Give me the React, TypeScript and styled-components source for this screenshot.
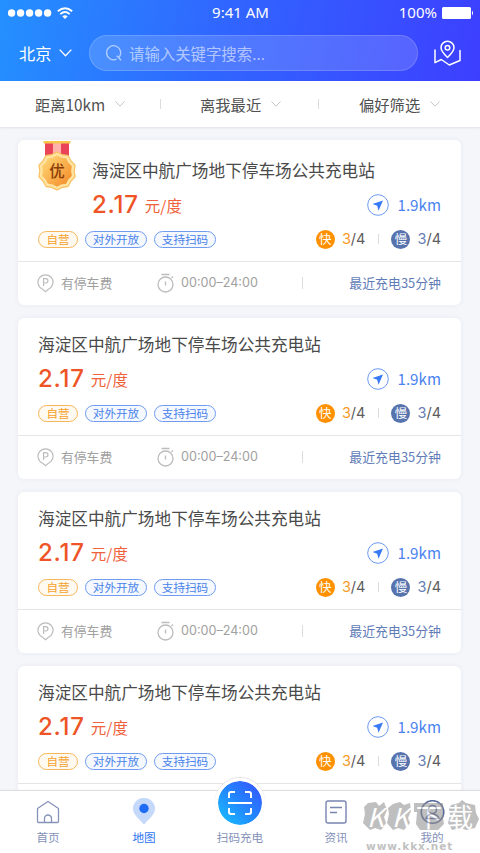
import React from "react";
import styled, { createGlobalStyle, css } from "styled-components";

const Global = createGlobalStyle`
  * { box-sizing: border-box; }
  body { margin: 0; background: #f5f6fa; }
  svg { display: block; flex: none; }
`;

const cjk = `"Noto Sans CJK SC", sans-serif`;
const latin = `Inter, "Noto Sans CJK SC", sans-serif`;

const Screen = styled.main`
  width: 480px;
  height: 853px;
  overflow: hidden;
  display: flex;
  flex-direction: column;
  background: #f5f6fa;
  font-family: ${cjk};
  white-space: nowrap;
`;

const Header = styled.header`
  flex: none;
  height: 81px;
  background: linear-gradient(100deg, #2490ff 0%, #3164ff 48%, #3d3fff 100%);
  color: #fff;
`;

const StatusBar = styled.div`
  display: grid;
  grid-template-columns: 1fr auto 1fr;
  align-items: center;
  height: 26px;
  padding: 0 6px 0 8px;
  font: 400 15px/24px "Noto Sans", sans-serif;
`;

const Clock = styled.span`
  padding: 0 1px 2px 0;
`;

const Percent = styled.span`
  padding-bottom: 2px;
`;

const Signal = styled.div`
  display: flex;
  align-items: center;
  gap: 5px;
`;

const Battery = styled.div`
  display: flex;
  align-items: center;
  justify-content: flex-end;
  gap: 5px;
`;

const SearchRow = styled.div`
  display: flex;
  align-items: center;
  height: 36px;
  margin-top: 9px;
  padding: 0 17px 0 19px;
`;

const City = styled.div`
  display: flex;
  align-items: center;
  gap: 8px;
  width: 70px;
  font-size: 16.2px;
`;

const SearchField = styled.div`
  display: flex;
  align-items: center;
  gap: 7px;
  width: 329px;
  height: 36px;
  margin-right: 15px;
  padding-left: 16px;
  border: 1px solid rgba(255, 255, 255, 0.16);
  border-radius: 18px;
  background: rgba(255, 255, 255, 0.15);
  color: rgba(255, 255, 255, 0.58);
  font-size: 15.4px;
`;

const Filters = styled.nav`
  flex: none;
  display: grid;
  grid-template-columns: 161px 158px 161px;
  height: 46px;
  background: #fff;
  box-shadow: 0 1px 2px rgba(40, 50, 90, 0.1);
  color: #505050;
  font-size: 15.3px;
`;

const Filter = styled.div<{ $left: number }>`
  display: flex;
  align-items: center;
  gap: 10px;
  padding-left: ${(p) => p.$left}px;
`;

const Rule = styled.i<{ $h?: number }>`
  width: 1px;
  height: ${(p) => p.$h ?? 10}px;
  background: #dcdcdf;
`;

const FilterRule = styled(Rule)`
  margin-left: auto;
`;

const List = styled.section`
  flex: 1;
  min-height: 0;
  overflow: hidden;
  display: flex;
  flex-direction: column;
  gap: 13px;
  padding: 13px 19px 0 18px;
`;

const Card = styled.article<{ $featured: boolean }>`
  flex: none;
  position: relative;
  height: ${(p) => (p.$featured ? 165 : 161)}px;
  padding-top: ${(p) => (p.$featured ? 18 : 14)}px;
  border-radius: 6px;
  background: #fff;
  box-shadow: 0 0 5px rgba(60, 70, 120, 0.07);
`;

const MedalSlot = styled.div`
  position: absolute;
  left: 19px;
  top: 1px;
`;

const Title = styled.h2<{ $featured: boolean }>`
  margin: 0;
  padding-left: ${(p) => (p.$featured ? 74 : 20)}px;
  height: 26px;
  font-size: 16.65px;
  line-height: 25px;
  font-weight: 400;
  color: #4a4a4a;
`;

const PriceRow = styled.div<{ $featured: boolean }>`
  display: flex;
  align-items: center;
  justify-content: space-between;
  height: 41px;
  padding: 0 20px 0 ${(p) => (p.$featured ? 74 : 20)}px;
`;

const Price = styled.div`
  display: flex;
  align-items: center;
  gap: 6px;
  color: #f0623c;
  font-size: 15.5px;
`;

const Amount = styled.strong`
  color: #ee5426;
  font: 500 24px/30px Inter, sans-serif;
  letter-spacing: 0.8px;
`;

const Unit = styled.span`
  line-height: 24px;
  padding-top: 1px;
`;

const Distance = styled.div`
  display: flex;
  align-items: center;
  gap: 8px;
  color: #4a83f0;
  font-size: 15.2px;
  line-height: 20px;
`;

const Kilometres = styled.span`
  padding-bottom: 2px;
`;

const TagRow = styled.div`
  display: flex;
  align-items: center;
  height: 28px;
  padding: 0 20px;
  gap: 7px;
`;

const Tag = styled.span<{ $warm?: boolean }>`
  display: flex;
  align-items: center;
  justify-content: center;
  height: 17px;
  width: ${(p) => (p.$warm ? 40 : 62)}px;
  border: 1px solid;
  border-radius: 9px;
  font-size: 11.6px;
  line-height: 15px;
  ${(p) =>
    p.$warm
      ? css`color: #f5a12c; border-color: #f7b65c; background: #fffaf1;`
      : css`color: #4a83ea; border-color: #6f9cf0; background: #f5f9ff;`}
`;

const Chargers = styled.div`
  display: flex;
  align-items: center;
  margin-left: auto;
  font: 400 14.5px/20px ${latin};
  color: #5c5c5c;
`;

const Speed = styled.span<{ $fast?: boolean }>`
  display: grid;
  place-items: center;
  width: 19px;
  height: 19px;
  margin-right: 7px;
  border-radius: 50%;
  background: ${(p) => (p.$fast ? "#ff9100" : "#5673ae")};
  color: #fff;
  font: 400 12.5px/18px ${cjk};
`;

const Free = styled.b<{ $fast?: boolean }>`
  font-weight: 400;
  color: ${(p) => (p.$fast ? "#f79a1f" : "#6680b5")};
`;

const ChargerRule = styled(Rule)`
  margin: 0 12px 0 13px;
`;

const CardFooter = styled.footer`
  display: grid;
  grid-template-columns: 120px 145px 1fr;
  align-items: center;
  height: 44px;
  margin-top: 8px;
  padding: 0 20px 2px 19px;
  border-top: 1px solid #e4e4e9;
  color: #a0a0a0;
  font-size: 12.8px;
`;

const Fact = styled.div`
  display: flex;
  align-items: center;
  gap: 7px;
`;

const Hours = styled.span`
  font: 400 12.6px/20px ${latin};
`;

const Recent = styled.div`
  display: flex;
  align-items: center;
  justify-content: space-between;
  color: #5f7cb8;
  font-size: 12.9px;
`;

const TabBar = styled.nav`
  flex: none;
  position: relative;
  display: grid;
  grid-template-columns: repeat(5, 96px);
  grid-template-rows: 62px;
  height: 62px;
  background: #fff;
  box-shadow: 0 -1px 1px #dedee2;
  z-index: 1;
`;

const Tab = styled.div<{ $active?: boolean }>`
  display: flex;
  flex-direction: column;
  align-items: center;
  justify-content: flex-end;
  gap: 4px;
  padding-bottom: 7px;
  color: ${(p) => (p.$active ? "#2b74f3" : "#8592b9")};
  font-size: 11.6px;
  line-height: 17px;
`;

const ScanButton = styled.div`
  flex: none;
  display: grid;
  place-items: center;
  width: 50px;
  height: 50px;
  margin-bottom: -3px;
  border: 3px solid #fff;
  border-radius: 50%;
  background: linear-gradient(225deg, #3558ff 8%, #2386ff 50%, #18c4ff 100%) padding-box;
  box-shadow: 0 -1px 1px #dedee2;
`;

const Watermark = styled.div`
  position: absolute;
  left: 363px;
  top: 8px;
  width: 117px;
  height: 54px;
  opacity: 0.55;
`;

const MarkArt = styled.svg`
  position: absolute;
  inset: 0;
`;

const MarkName = styled.div`
  position: absolute;
  left: 4px;
  top: 2px;
  display: grid;
  grid-template-columns: 25px 24px 31px 28px;
  color: #fff;
  font: 400 26px/30px ${cjk};
`;

const Slanted = styled.span`
  font-style: italic;
`;

const MarkSite = styled.div`
  position: absolute;
  left: 3px;
  top: 41px;
  color: #8f8f8f;
  font: 700 10.5px/12px "DejaVu Sans", sans-serif;
  letter-spacing: 0.95px;
`;

const Chevron = ({ w = 10, color = "#c5c5c8" }: { w?: number; color?: string }) => (
  <svg width={w} height={w * 0.6} viewBox="0 0 10 6" fill="none" stroke={color} strokeWidth="1">
    <path d="M.5.5 5 5.2 9.5.5" />
  </svg>
);

const scallop = (r: number) =>
  Array.from({ length: 20 }, (_, i) => {
    const a = (Math.PI * i) / 10 - Math.PI / 2;
    const d = i % 2 ? r * 0.9 : r;
    return `${(20 + d * Math.cos(a)).toFixed(2)},${(30 + d * Math.sin(a)).toFixed(2)}`;
  }).join(" ");

const Medal = () => (
  <svg width="40" height="51" viewBox="0 0 40 51" strokeLinejoin="round">
    <defs>
      <linearGradient id="gold" x1="0" y1="0" x2="1" y2="1">
        <stop offset="0" stopColor="#ffd978" />
        <stop offset="1" stopColor="#f58a28" />
      </linearGradient>
    </defs>
    <path d="M8 2h24v16H8z" fill="#e94458" />
    <path d="M16 2h8v16h-8z" fill="#ffb3ab" />
    <path d="M6.500 0h27v2.500h-27z" fill="#f6c84e" />
    <polygon points={scallop(17.5)} fill="#f9bf5e" stroke="#f9bf5e" strokeWidth="4" />
    <polygon points={scallop(16.5)} fill="#ffe3a0" stroke="#ffe3a0" strokeWidth="3.500" />
    <polygon points={scallop(14.5)} fill="url(#gold)" stroke="url(#gold)" strokeWidth="2" />
    <text x="20" y="35.500" textAnchor="middle" fontSize="15.500" fontWeight="500" fill="#8a3c06" fontFamily="Noto Sans CJK SC, sans-serif">
      优
    </text>
  </svg>
);

const stations = [true, false, false, false];

const Station = ({ featured }: { featured: boolean }) => (
  <Card $featured={featured}>
    {featured && (
      <MedalSlot>
        <Medal />
      </MedalSlot>
    )}
    <Title $featured={featured}>海淀区中航广场地下停车场公共充电站</Title>
    <PriceRow $featured={featured}>
      <Price>
        <Amount>2.17</Amount>
        <Unit>元/度</Unit>
      </Price>
      <Distance>
        <svg width="22" height="22" viewBox="0 0 22 22">
          <circle cx="11" cy="11" r="10.300" fill="none" stroke="#6d9bf3" />
          <path d="M16 6.500 5.500 10l4.700 1.700 1.300 5z" fill="#3879f5" />
        </svg>
        <Kilometres>1.9km</Kilometres>
      </Distance>
    </PriceRow>
    <TagRow>
      <Tag $warm>自营</Tag>
      <Tag>对外开放</Tag>
      <Tag>支持扫码</Tag>
      <Chargers>
        <Speed $fast>快</Speed>
        <Free $fast>3</Free>/4
        <ChargerRule />
        <Speed>慢</Speed>
        <Free>3</Free>/4
      </Chargers>
    </TagRow>
    <CardFooter>
      <Fact>
        <svg width="17" height="20" viewBox="0 0 17 20" fill="none" stroke="#bdbdbd" strokeWidth="1.200">
          <path d="M5.600 16.200a7.500 7.500 0 1 1 5.800 0L8.500 18.800z" />
          <path d="M6.600 13V5.700h2.200a2.100 2.100 0 0 1 0 4.300H6.600" />
        </svg>
        有停车费
      </Fact>
      <Fact>
        <svg width="17" height="20" viewBox="0 0 17 20" fill="none" stroke="#bdbdbd" strokeWidth="1.300">
          <circle cx="8.500" cy="11.500" r="7.500" />
          <path d="M4.500 1.500h8M8.500 8.500v4M14.500 5l1.500-1.500" />
        </svg>
        <Hours>00:00–24:00</Hours>
      </Fact>
      <Recent>
        <Rule $h={12} />
        最近充电35分钟
      </Recent>
    </CardFooter>
  </Card>
);

export default function App() {
  return (
    <Screen>
      <Global />
      <Header>
        <StatusBar>
          <Signal>
            <svg width="44" height="8" viewBox="0 0 44 8" fill="#fff">
              {[3.6, 12.6, 21.6, 30.6, 39.6].map((x) => (
                <circle key={x} cx={x} cy="4" r="3.700" />
              ))}
            </svg>
            <svg width="16" height="12" viewBox="0 0 16 12" fill="none" stroke="#fff" strokeWidth="1.900">
              <path d="M.8 4.200q7.200-6 14.400 0M3.300 7.100q4.700-4 9.400 0" />
              <path d="M5.300 9.200q2.700-2 5.400 0L8 12z" fill="#fff" stroke="none" />
            </svg>
          </Signal>
          <Clock>9:41 AM</Clock>
          <Battery>
            <Percent>100%</Percent>
            <svg width="32" height="12" viewBox="0 0 32 12" fill="#fff">
              <rect width="29" height="12" rx="1.500" />
              <path d="M30 3.500q2 2.500 0 5z" />
            </svg>
          </Battery>
        </StatusBar>
        <SearchRow>
          <City>
            北京
            <Chevron w={13} color="#fff" />
          </City>
          <SearchField>
            <svg width="16" height="16" viewBox="0 0 16 16" fill="none" stroke="currentColor" strokeWidth="1.300">
              <path d="M10.600 14.100a7 7 0 1 1 2-1.400M10.800 10.800l4.300 4.500" />
            </svg>
            请输入关键字搜索...
          </SearchField>
          <svg width="28" height="27" viewBox="0 0 28 27" fill="none" stroke="#fff" strokeWidth="1.500" strokeLinejoin="round" strokeLinecap="round">
            <path d="M14.500 17.500C10.500 13.500 8 10.800 8 7.700a6.500 6.500 0 0 1 13 0c0 3.100-2.500 5.800-6.500 9.800z" />
            <circle cx="14.500" cy="7.700" r="2.300" />
            <path d="M2 10v12.700l6.300-3.200 8 5.500L27 20.500V10.500" />
          </svg>
        </SearchRow>
      </Header>
      <Filters>
        <Filter $left={35}>
          距离10km
          <Chevron />
          <FilterRule />
        </Filter>
        <Filter $left={39}>
          离我最近
          <Chevron />
          <FilterRule />
        </Filter>
        <Filter $left={40}>
          偏好筛选
          <Chevron />
        </Filter>
      </Filters>
      <List>
        {stations.map((featured, i) => (
          <Station key={i} featured={featured} />
        ))}
      </List>
      <TabBar>
        <Tab>
          <svg width="24" height="25" viewBox="0 0 24 25" fill="none" stroke="#8592b9" strokeWidth="1.300" strokeLinejoin="round">
            <path d="M1.500 8.500 12 1.500l10.500 7v13q0 1-1 1h-19q-1 0-1-1z" />
            <path d="M8.500 22.500v-4a3.500 3.500 0 0 1 7 0v4" />
          </svg>
          首页
        </Tab>
        <Tab $active>
          <svg width="22" height="27" viewBox="0 0 22 27">
            <path d="M11 26.500C5 20 0 16.500 0 10.800a11 11 0 0 1 22 0C22 16.500 17 20 11 26.500z" fill="#c5d9fb" />
            <circle cx="11" cy="10.500" r="4.700" fill="#1f6bf6" />
          </svg>
          地图
        </Tab>
        <Tab>
          <ScanButton>
            <svg width="24" height="24" viewBox="0 0 24 24" fill="none" stroke="#fff" strokeWidth="2">
              <path d="M1 7V3q0-2 2-2h4M17 1h4q2 0 2 2v4M23 17v4q0 2-2 2h-4M7 23H3q-2 0-2-2v-4M0 12h24" />
            </svg>
          </ScanButton>
          扫码充电
        </Tab>
        <Tab>
          <svg width="22" height="25" viewBox="0 0 22 25" fill="none" stroke="#7785b0" strokeWidth="1.400">
            <rect x="1" y="1" width="20" height="22" rx="2" />
            <path d="M5 7.500h12M5 12.500h7" />
          </svg>
          资讯
        </Tab>
        <Tab>
          <svg width="25" height="25" viewBox="0 0 25 25" fill="none" stroke="#5f6f9f" strokeWidth="1.600">
            <circle cx="12.500" cy="12" r="11.300" />
            <circle cx="12.500" cy="9.500" r="4" />
            <path d="M6 18.500q2-4.500 6.500-4.500t6.500 4.500z" />
          </svg>
          我的
        </Tab>
        <Watermark>
          <MarkArt width="117" height="54" viewBox="0 0 117 54" fill="#8c8c8c">
            <path d="M5 4 13 3l3 4 5-4 3 8-3 7 2 6-5 7-6-2-5 2-7-7 2-9-1-7z" />
            <path d="M30 5l7-2 4 3 6-2 1 8-3 7 2 5-6 7-6-2-5 2-6-7 2-9-1-6z" />
            <path d="M51 4h29v15l1 6-6 6H57l-4-6 1-12h-3z" />
            <path d="M88 6l8-2 3-3 4 3 9 2 1 8 3 6-4 9-9 2-5-2-9 2-4-7 2-8-1-6z" />
          </MarkArt>
          <MarkName>
            <Slanted>K</Slanted>
            <Slanted>K</Slanted>
            <span>下</span>
            <span>载</span>
          </MarkName>
          <MarkSite>www.kkx.net</MarkSite>
        </Watermark>
      </TabBar>
    </Screen>
  );
}
